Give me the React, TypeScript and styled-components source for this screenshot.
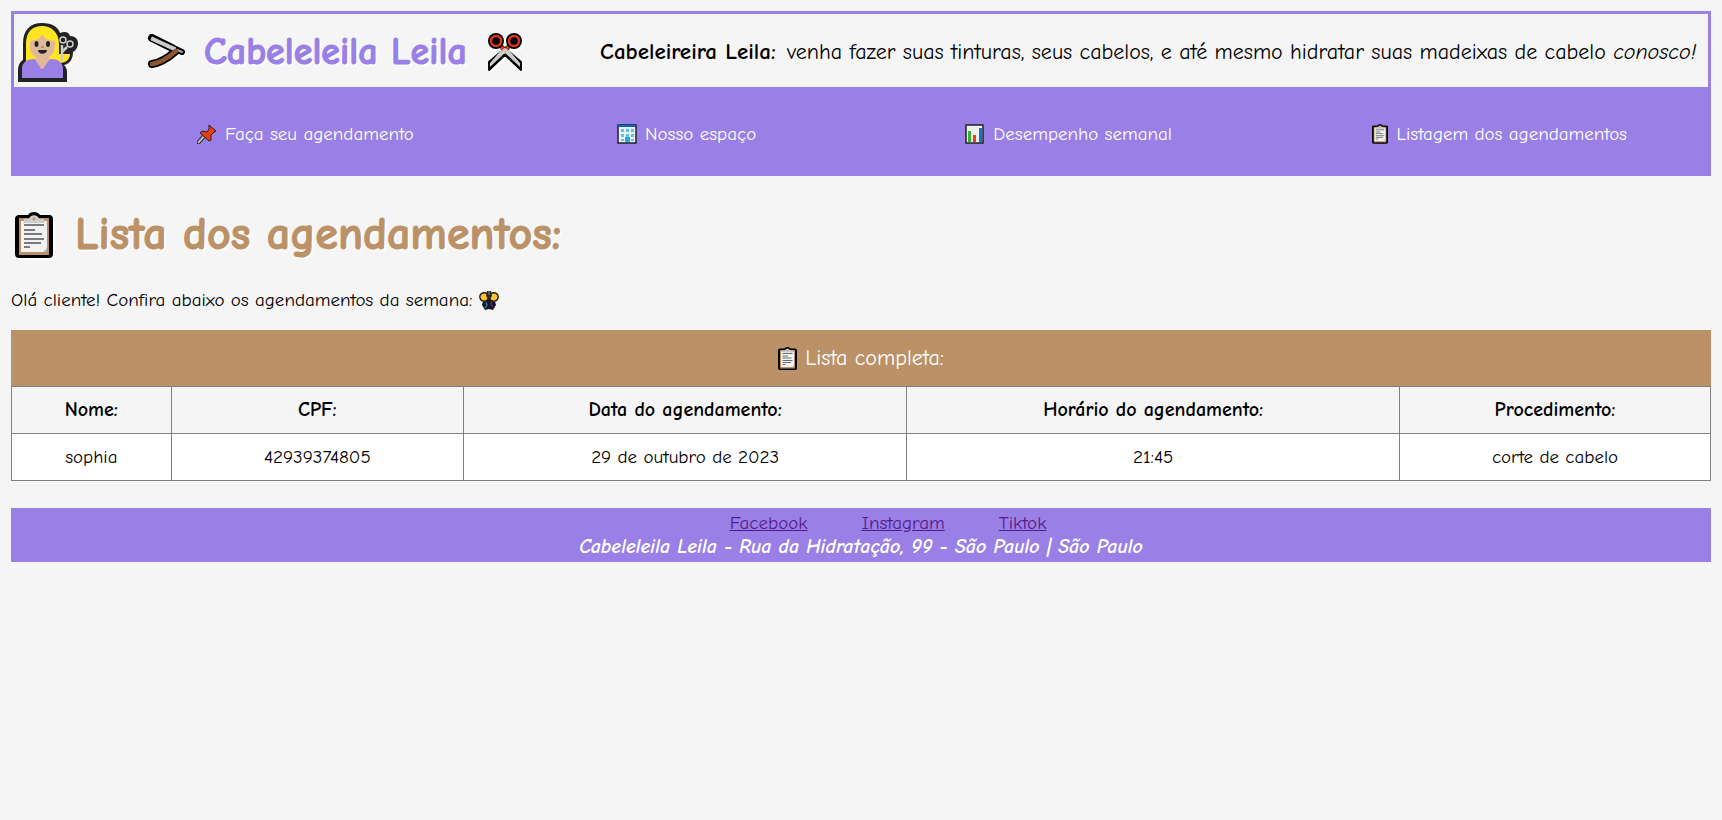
import React from 'react';
import styled, { createGlobalStyle } from 'styled-components';

const purple = '#997fe6';
const brown = '#bb9167';

const GlobalStyle = createGlobalStyle`
  * { box-sizing: border-box; }
  body {
    margin: 11px;
    background: #f5f5f5;
    color: #000;
    font-family: 'Comic Sans MS', 'Comic Neue', 'Open Sans', sans-serif;
    font-size: 19px;
    line-height: 24px;
  }
`;

const Header = styled.header`
  display: flex;
  align-items: center;
  min-height: 76px;
  padding: 2px 12px 0 4px;
  border: 3px solid ${purple};
  border-bottom: 0;
`;

const Brand = styled.h1`
  display: flex;
  align-items: center;
  gap: 19px;
  margin: 0 0 0 69px;
  color: ${purple};
  font-size: 38px;
  line-height: 48px;
  white-space: nowrap;
  text-shadow: 2px 2px 2px #fff;
  -webkit-text-stroke: 1px ${purple};
`;

const Intro = styled.p`
  margin: 0 0 0 auto;
  font-size: 22px;
  line-height: 28px;

  strong {
    margin-right: 4px;
    font-size: 23px;
  }
`;

const Icon = styled.svg<{ $w: number; $h: number; $glow?: boolean }>`
  flex: none;
  width: ${({ $w }) => $w}px;
  height: ${({ $h }) => $h}px;
  vertical-align: middle;
  filter: ${({ $glow }) => ($glow ? 'drop-shadow(2px 2px 1px #fff)' : 'none')};
`;

const Nav = styled.nav`
  padding: 0 84px 0 186px;
  background: ${purple};
`;

const NavList = styled.ul`
  display: grid;
  grid-template-columns: 421fr 349fr 408fr 253fr;
  align-items: center;
  min-height: 89px;
  margin: 0;
  padding: 4px 0 0;
  list-style: none;
`;

const NavLink = styled.a`
  display: flex;
  align-items: center;
  gap: 8px;
  color: #fff;
  text-decoration: none;
  white-space: nowrap;
`;

const PageTitle = styled.h2`
  display: flex;
  align-items: center;
  gap: 22px;
  margin: 29px 0 23px;
  padding-left: 4px;
  color: ${brown};
  font-size: 46px;
  line-height: 60px;
  text-shadow: 2px 2px 2px #fff;
  -webkit-text-stroke: 1px ${brown};
`;

const Greeting = styled.p`
  display: flex;
  align-items: center;
  gap: 7px;
  margin: 0 0 18px;
`;

const Table = styled.table`
  width: 100%;
  border-collapse: collapse;
  table-layout: fixed;
  background: #fff;
  text-align: center;
`;

const Caption = styled.caption`
  background: ${brown};
  color: #fff;
  font-size: 22px;
  line-height: 56px;
`;

const CaptionContent = styled.span`
  display: flex;
  align-items: center;
  justify-content: center;
  gap: 8px;
`;

const HeadCell = styled.th<{ $width: number }>`
  width: ${({ $width }) => $width}%;
  height: 47px;
  padding: 0;
  border: 1px solid #808080;
  background: #f5f5f5;
  font-size: 20px;
`;

const Cell = styled.td`
  height: 47px;
  padding: 0;
  border: 1px solid #808080;
`;

const Footer = styled.footer`
  margin-top: 27px;
  padding: 3px 0;
  background: ${purple};
  text-align: center;
`;

const SocialList = styled.ul`
  display: flex;
  justify-content: center;
  margin: 0;
  padding: 0;
  list-style: none;

  li { margin-left: 54px; }
`;

const SocialLink = styled.a`
  color: #551a8b;
`;

const Address = styled.address`
  color: #fff;
  font-size: 20px;
  font-weight: 700;
`;

const Hairdresser = () => (
  <Icon viewBox="0 0 60 60" $w={60} $h={60} aria-hidden="true">
    <path d="M0 60V49c0-6 2-9 5-11V22C5 8 12 1 24 1c10 0 16 4 18 10 5-2 9-1 10 3 5 0 8 3 8 7 0 5-3 8-5 9 0 8-4 12-9 13 2 2 3 4 3 7v10z" fill="#222" />
    <path d="M8 37V22C8 10 14 4 24 4s17 7 17 18v10h11c0 5-4 9-10 9H8z" fill="#fee421" />
    <path d="M18 34h13v13H18z" fill="#deb898" />
    <path d="M12 19c8-1 10-3 12-7 2 4 6 7 13 7v5c0 8-5 12-13 12s-12-4-12-12z" fill="#deb898" />
    <path d="M4 56v-9c0-7 5-10 13-10l7 11 8-11c8 0 13 3 13 10v9z" fill={purple} />
    <path d="M17 37l7 11 7-11z" fill="#deb898" />
    <ellipse cx="18.5" cy="22" rx="2" ry="3" fill="#222" />
    <ellipse cx="30" cy="22" rx="2" ry="3" fill="#222" />
    <path d="M20 28h9c0 5-9 5-9 0z" fill="#222" />
    <path d="M23 25h3" stroke="#b58468" strokeWidth="1.5" />
    <path d="M44 39V23M44 30l5-5" stroke="#ccc" strokeWidth="2.5" fill="none" />
    <circle cx="45" cy="18" r="3" fill="#222" stroke="#ccc" strokeWidth="1.5" />
    <circle cx="52" cy="22" r="3" fill="#222" stroke="#ccc" strokeWidth="1.5" />
  </Icon>
);

const Razor = () => (
  <Icon viewBox="0 0 38 36" $w={38} $h={36} $glow aria-hidden="true">
    <path d="M5 4L35 18" stroke="#000" strokeWidth="6" strokeLinecap="round" />
    <path d="M5 4L25 14" stroke="#000" strokeWidth="8" strokeLinecap="round" />
    <path d="M5 30C13 29 21 24 29 17" stroke="#000" strokeWidth="8" strokeLinecap="round" fill="none" />
    <path d="M5 3L29 14l-3 2L4 6z" fill="#ccc" stroke="#ccc" />
    <path d="M30 16l5 2" stroke="#aaa" strokeWidth="2" strokeLinecap="round" />
    <path d="M5 30C13 29 21 24 29 17" stroke="#8e562e" strokeWidth="4.5" strokeLinecap="round" fill="none" />
  </Icon>
);

const Scissors = () => (
  <Icon viewBox="0 0 38 40" $w={38} $h={40} $glow aria-hidden="true">
    <path d="M14 12L35 30v8L17 21zM24 12L3 30v8l18-17z" fill="#000" stroke="#000" strokeWidth="2" strokeLinejoin="round" />
    <path d="M16 18l5-2 13 15v4zM22 18l-5-2L4 31v4z" fill="#ccc" />
    <path d="M13 13l6 5 6-5" stroke="#dd3518" strokeWidth="3" fill="none" />
    <path d="M16 18l3-2 3 2-3 4z" fill="#ccc" />
    <circle cx="10" cy="9" r="8" fill="#000" />
    <circle cx="28" cy="9" r="8" fill="#000" />
    <circle cx="10" cy="9" r="5" fill="#000" stroke="#dd3518" strokeWidth="2.5" />
    <circle cx="28" cy="9" r="5" fill="#000" stroke="#dd3518" strokeWidth="2.5" />
  </Icon>
);

const Pin = () => (
  <Icon viewBox="0 0 20 20" $w={20} $h={20} aria-hidden="true">
    <path d="M1 19l7-8" stroke="#222" strokeWidth="4" strokeLinecap="round" />
    <path d="M1 19l7-8" stroke="#bbb" strokeWidth="2" />
    <path d="M12 1l7 6-3 2-2 2v5l-2 1-9-8 2-2 5 1 2-3z" fill="#e83b10" stroke="#222" strokeWidth="1" strokeLinejoin="round" />
  </Icon>
);

const Building = () => (
  <Icon viewBox="0 0 20 20" $w={20} $h={20} aria-hidden="true">
    <rect x="1" y="1" width="18" height="18" fill="#eee" stroke="#1c2230" strokeWidth="1.5" />
    <path d="M1 2h18" stroke="#0868b8" strokeWidth="2" />
    <path d="M4 5h3v3H4zm5 0h3v3H9zm5 0h3v3h-3zM4 10h3v3H4zm5 0h3v3H9zm5 0h3v3h-3zM4 15h3v2H4zm10 0h3v2h-3z" fill="#50c8f0" />
    <path d="M8 13h5v5H8z" fill="#25a8dc" />
  </Icon>
);

const Chart = () => (
  <Icon viewBox="0 0 20 20" $w={20} $h={20} aria-hidden="true">
    <rect x="1" y="1" width="17" height="18" fill="#eee" stroke="#222" strokeWidth="1.5" />
    <path d="M3 7h3v11H3z" fill="#35b52c" />
    <path d="M8 11h3v7H8z" fill="#ee3b16" />
    <path d="M14 4h3v14h-3z" fill="#0878d4" />
  </Icon>
);

const Clipboard = ({ w, h, glow }: { w: number; h: number; glow?: boolean }) => (
  <Icon viewBox="0 0 38 46" $w={w} $h={h} $glow={glow} aria-hidden="true">
    <path d="M4 3h9c2-4 10-4 12 0h9c3 0 4 2 4 4v35c0 3-2 4-4 4H4c-3 0-4-2-4-4V7c0-3 2-4 4-4z" fill="#000" />
    <path d="M4 6h30v37H4z" fill={brown} />
    <path d="M6 9h26v31H6z" fill="#f2f2f2" />
    <path d="M28 40l4-4v4z" fill="#bbb" />
    <path d="M9 7h5c1-5 9-5 10 0h5v4H9z" fill="#ccc" />
    <circle cx="19" cy="7" r="1.5" fill={brown} />
    <path d="M9 13h20M9 18h11M9 22h18M9 27h20M9 31h17M9 35h6" stroke="#555" strokeWidth="1.7" />
  </Icon>
);

const Fly = () => (
  <Icon viewBox="0 0 20 20" $w={20} $h={20} aria-hidden="true">
    <path d="M5 8h10l2 7-3 5-4-1-4 1-3-5z" fill="#18151f" />
    <path d="M9 4C4 1 0 4 1 8c1 4 6 4 8 1zM11 4c5-3 9 0 8 4-1 4-6 4-8 1z" fill="#fbc43a" stroke="#1c1910" strokeWidth="1.3" />
    <path d="M8 1h4l1 5-3 4-3-4z" fill="#292929" />
    <path d="M10 1v4" stroke="#888" />
    <path d="M7 12l1 3-2 3" stroke="#17819a" strokeWidth="1.5" fill="none" />
    <path d="M13 11l-1 3 2 3" stroke="#4b278d" strokeWidth="1.5" fill="none" />
  </Icon>
);

const navItems = [
  { label: 'Faça seu agendamento', icon: <Pin /> },
  { label: 'Nosso espaço', icon: <Building /> },
  { label: 'Desempenho semanal', icon: <Chart /> },
  { label: 'Listagem dos agendamentos', icon: <Clipboard w={16} h={20} /> },
];

const columns = [
  { label: 'Nome:', width: 9.4 },
  { label: 'CPF:', width: 17.2 },
  { label: 'Data do agendamento:', width: 26.1 },
  { label: 'Horário do agendamento:', width: 29 },
  { label: 'Procedimento:', width: 18.3 },
];

const bookings = [['sophia', '42939374805', '29 de outubro de 2023', '21:45', 'corte de cabelo']];

export default function App() {
  return (
    <>
      <GlobalStyle />
      <Header>
        <Hairdresser />
        <Brand>
          <Razor />
          Cabeleleila Leila
          <Scissors />
        </Brand>
        <Intro>
          <strong>Cabeleireira Leila:</strong> venha fazer suas tinturas, seus cabelos, e até mesmo hidratar suas
          madeixas de cabelo <em>conosco!</em>
        </Intro>
      </Header>
      <Nav>
        <NavList>
          {navItems.map(({ label, icon }) => (
            <li key={label}>
              <NavLink href="#">
                {icon}
                {label}
              </NavLink>
            </li>
          ))}
        </NavList>
      </Nav>
      <main>
        <PageTitle>
          <Clipboard w={38} h={46} glow />
          Lista dos agendamentos:
        </PageTitle>
        <Greeting>
          Olá cliente! Confira abaixo os agendamentos da semana: <Fly />
        </Greeting>
        <Table>
          <Caption>
            <CaptionContent>
              <Clipboard w={19} h={23} />
              Lista completa:
            </CaptionContent>
          </Caption>
          <thead>
            <tr>
              {columns.map(({ label, width }) => (
                <HeadCell key={label} scope="col" $width={width}>
                  {label}
                </HeadCell>
              ))}
            </tr>
          </thead>
          <tbody>
            {bookings.map((row) => (
              <tr key={row[1]}>
                {row.map((value) => (
                  <Cell key={value}>{value}</Cell>
                ))}
              </tr>
            ))}
          </tbody>
        </Table>
      </main>
      <Footer>
        <SocialList>
          {['Facebook', 'Instagram', 'Tiktok'].map((name) => (
            <li key={name}>
              <SocialLink href="#">{name}</SocialLink>
            </li>
          ))}
        </SocialList>
        <Address>Cabeleleila Leila - Rua da Hidratação, 99 - São Paulo | São Paulo</Address>
      </Footer>
    </>
  );
}
